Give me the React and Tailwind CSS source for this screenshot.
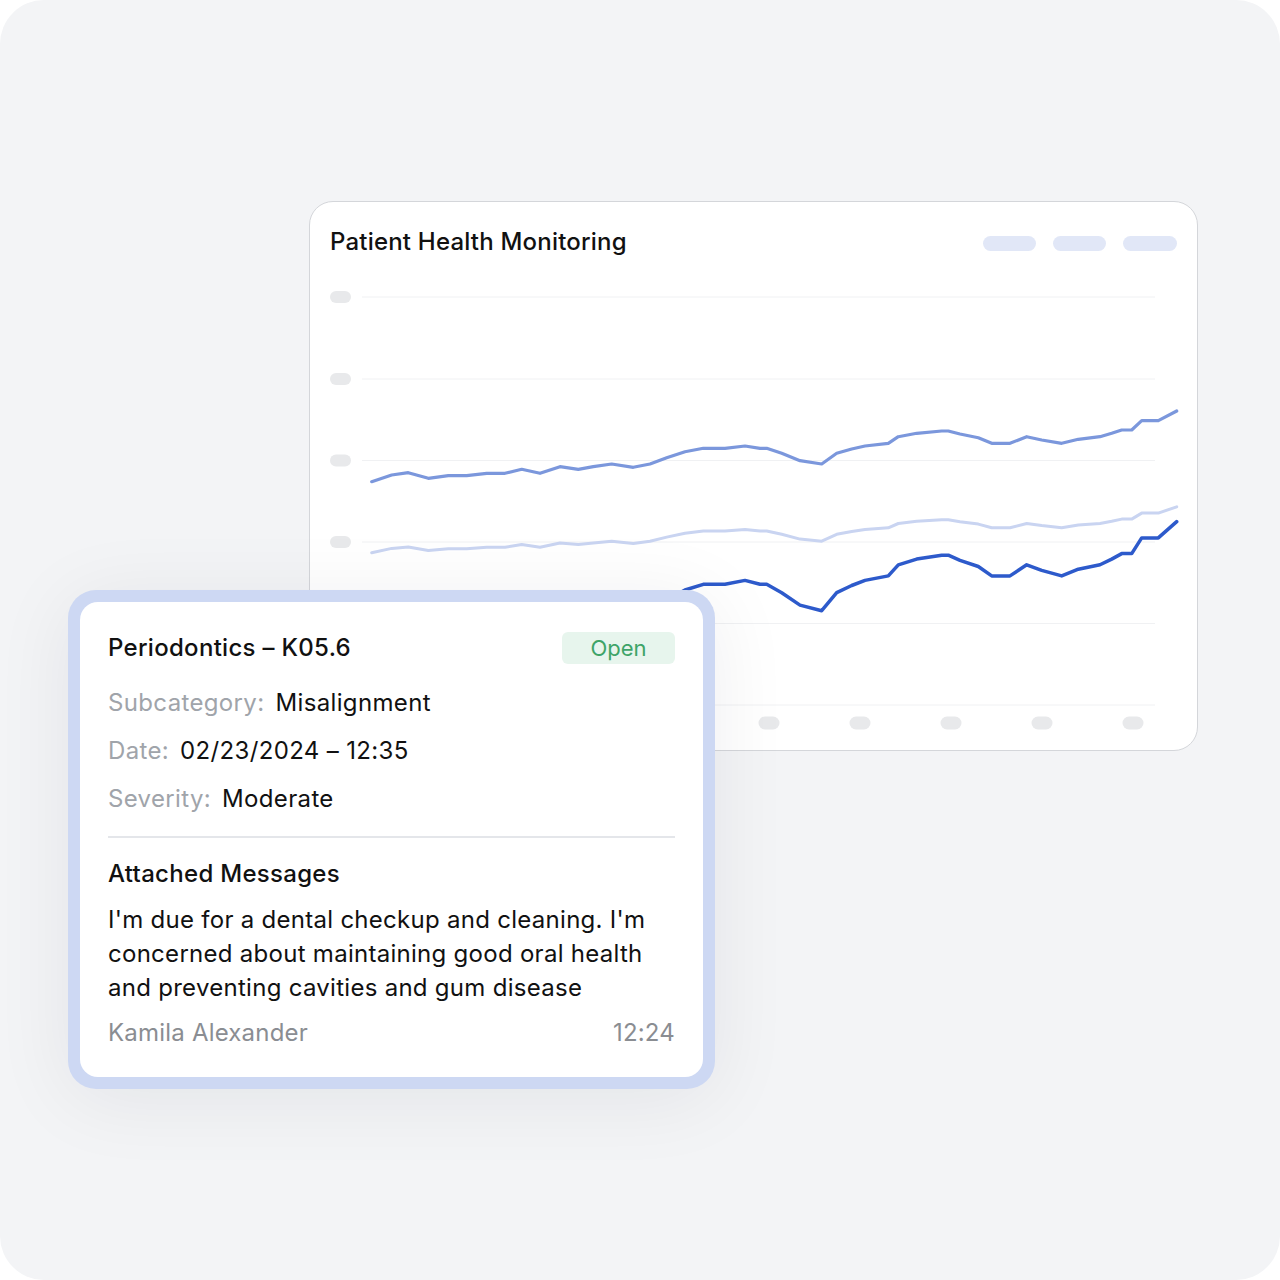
const base = [
  [371.7, 481.7], [391.7, 475], [408.3, 472.7], [428.3, 478.3], [448.3, 475.7], [466.7, 475.7],
  [486.7, 473.3], [505, 473.3], [521.7, 469.3], [540, 473.3], [560, 466.7], [578.3, 469.3],
  [593.3, 466.7], [611.7, 464], [633.3, 467.3], [650, 464], [666.7, 457.7], [685, 451.7],
  [703.3, 448.3], [725, 448.3], [745, 446], [760, 448.3], [766.7, 448.3], [781.7, 453.3],
  [800, 460.7], [821.7, 464], [836.7, 453.3], [851.7, 449], [865, 446], [888.3, 443.3],
  [898.3, 436.7], [916.7, 433.3], [941.7, 431], [948.3, 431], [960, 434], [978.3, 437.7],
  [991.7, 443.3], [1010, 443.3], [1026.7, 436.7], [1041.7, 440], [1061.7, 443.3], [1078.3, 439.3],
  [1100, 436.7], [1111.7, 433.3], [1121.7, 430], [1131.7, 430], [1141.7, 420.7], [1158.3, 420.7],
  [1176.7, 411],
];

const toPath = (pts) =>
  pts.map((p, i) => `${i ? "L" : "M"}${p[0]} ${p[1].toFixed(1)}`).join(" ");

const gridYs = [297, 379, 460.5, 542, 623.5, 705];
const xPills = [405, 496, 587, 678, 769, 860, 951, 1042, 1133];

function Chart() {
  const l1 = base;
  const l2 = base.map(([x, y]) => [x, 531 + (y - 448.3) * 0.65]);
  const l3 = base.map(([x, y]) => [x, 584.3 + (y - 448.3) * 1.68]);
  return (
    <svg width="887" height="470" viewBox="310 280 887 470" className="block">
      {gridYs.map((y) => (
        <g key={y}>
          <line x1="362" x2="1155" y1={y} y2={y} stroke="#f0f1f3" strokeWidth="1" />
          <rect x="330" y={y - 6} width="21" height="12" rx="6" fill="#e8e9eb" />
        </g>
      ))}
      {xPills.map((x) => (
        <rect key={x} x={x - 10.5} y="716.5" width="21" height="13" rx="6.5" fill="#e8e9eb" />
      ))}
      <path d={toPath(l2)} fill="none" stroke="#c9d4f1" strokeWidth="3" strokeLinejoin="round" strokeLinecap="round" />
      <path d={toPath(l1)} fill="none" stroke="#7b97dc" strokeWidth="3.2" strokeLinejoin="round" strokeLinecap="round" />
      <path d={toPath(l3)} fill="none" stroke="#2d5acb" strokeWidth="3.5" strokeLinejoin="round" strokeLinecap="round" />
    </svg>
  );
}

function Row({ label, value, mt }) {
  return (
    <div className={`flex items-center gap-[11px] text-[24px] leading-[32px] tracking-[0.35px] ${mt}`}>
      <span className="text-[#a0a4aa]">{label}</span>
      <span className="text-[#111111]">{value}</span>
    </div>
  );
}

export default function App() {
  return (
    <div className="w-[1280px] h-[1280px] bg-white font-[Inter,sans-serif]">
      <div className="h-full rounded-[44px] bg-[#f3f4f6] pt-[201px]">
        <div className="ml-[309px] w-[889px] h-[550px] rounded-[24px] border border-[#d4d6da] bg-white overflow-hidden">
          <div className="flex h-[78px] items-center justify-between px-[20px]">
            <div className="mt-[1px] text-[24px] leading-[32px] font-medium tracking-[0.2px] text-[#111111]">
              Patient Health Monitoring
            </div>
            <div className="mt-[4px] flex gap-[17px]">
              <div className="h-[15px] w-[53px] rounded-full bg-[#e1e7f7]" />
              <div className="h-[15px] w-[53px] rounded-full bg-[#e1e7f7]" />
              <div className="h-[15px] w-[54px] rounded-full bg-[#e1e7f7]" />
            </div>
          </div>
          <Chart />
        </div>

        <div className="relative z-10 ml-[68px] mt-[-161px] w-[647px] rounded-[28px] bg-[#cdd8f3] p-[12px] shadow-[0_10px_80px_rgba(17,24,39,0.07)]">
          <div className="rounded-[18px] bg-white px-[28px] pt-[30px] pb-[28px]">
            <div className="flex h-[32px] items-center justify-between">
              <div className="text-[24px] leading-[32px] font-medium tracking-[0.3px] text-[#111111]">
                Periodontics – K05.6
              </div>
              <div className="flex h-[32px] w-[113px] items-center justify-center rounded-[6px] bg-[#e7f5ed] text-[22px] text-[#3ea468]">
                Open
              </div>
            </div>
            <Row label="Subcategory:" value="Misalignment" mt="mt-[23px]" />
            <Row label="Date:" value="02/23/2024 – 12:35" mt="mt-[16px]" />
            <Row label="Severity:" value="Moderate" mt="mt-[16px]" />
            <div className="mt-[21px] h-[2px] bg-[#e4e6ea]" />
            <div className="mt-[20px] text-[24px] leading-[32px] font-medium tracking-[0.3px] text-[#111111]">
              Attached Messages
            </div>
            <p className="mt-[13px] text-[24px] leading-[34px] tracking-[0.28px] text-[#111111]">
              I'm due for a dental checkup and cleaning. I'm concerned about maintaining good oral health and preventing cavities and gum disease
            </p>
            <div className="mt-[12px] flex items-center justify-between text-[24px] leading-[32px] tracking-[0.2px] text-[#8a8d92]">
              <span>Kamila Alexander</span>
              <span>12:24</span>
            </div>
          </div>
        </div>
      </div>
    </div>
  );
}
